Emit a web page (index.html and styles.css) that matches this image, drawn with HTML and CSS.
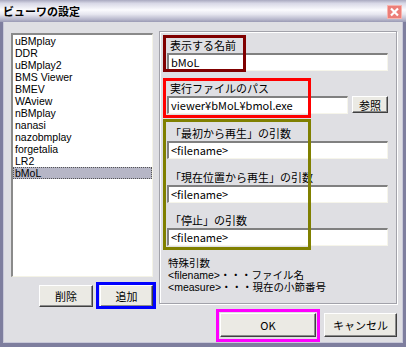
FILE: index.html
```html
<!DOCTYPE html>
<html lang="ja">
<head>
<meta charset="utf-8">
<title>ビューワの設定</title>
<link rel="stylesheet" href="styles.css">
</head>
<body>
<div class="window">
  <div class="titlebar">
    <span class="title">ビューワの設定</span>
    <span class="close">
      <svg width="15" height="14" viewBox="0 0 15 14">
        <rect x="0.5" y="0.5" width="14" height="13" fill="#ec7e78" stroke="#f6b4ae"/>
        <path d="M4 3.5 L11 10.5 M11 3.5 L4 10.5" stroke="#fff" stroke-width="2.2"/>
      </svg>
    </span>
  </div>
  <div class="frame">
    <div class="left">
      <div class="listbox">
        <div class="item">uBMplay</div>
        <div class="item">DDR</div>
        <div class="item">uBMplay2</div>
        <div class="item">BMS Viewer</div>
        <div class="item">BMEV</div>
        <div class="item">WAview</div>
        <div class="item">nBMplay</div>
        <div class="item">nanasi</div>
        <div class="item">nazobmplay</div>
        <div class="item">forgetalia</div>
        <div class="item">LR2</div>
        <div class="item selected">bMoL</div>
      </div>
      <div class="left-buttons">
        <div class="btn btn-del">削除</div>
        <div class="btn btn-add">追加</div>
      </div>
    </div>
    <div class="right">
      <div class="group">
        <div class="field f-name">
          <div class="label">表示する名前</div>
          <div class="input">bMoL</div>
        </div>
        <div class="field f-path">
          <div class="label">実行ファイルのパス</div>
          <div class="path-row">
            <div class="input input-path">viewer¥bMoL¥bmol.exe</div>
            <div class="btn btn-browse">参照</div>
          </div>
        </div>
        <div class="field f-arg1">
          <div class="label">「最初から再生」の引数</div>
          <div class="input">&lt;filename&gt;</div>
        </div>
        <div class="field f-arg2">
          <div class="label">「現在位置から再生」の引数</div>
          <div class="input">&lt;filename&gt;</div>
        </div>
        <div class="field f-arg3">
          <div class="label">「停止」の引数</div>
          <div class="input">&lt;filename&gt;</div>
        </div>
        <div class="notes">
          <div>特殊引数</div>
          <div>&lt;filename&gt;・・・ファイル名</div>
          <div>&lt;measure&gt;・・・現在の小節番号</div>
        </div>
      </div>
      <div class="dlg-buttons">
        <div class="btn btn-ok">OK</div>
        <div class="btn btn-cancel">キャンセル</div>
      </div>
    </div>
  </div>
  <div class="mark mark-name"></div>
  <div class="mark mark-path"></div>
  <div class="mark mark-args"></div>
  <div class="mark mark-add"></div>
  <div class="mark mark-ok"></div>
</div>
</body>
</html>
```
FILE: styles.css
```css
* { box-sizing: border-box; }
html, body { margin: 0; padding: 0; background: #dfdfe3; }
body {
  font-family: "Noto Sans CJK JP", "Noto Sans", sans-serif;
  font-size: 11px;
  color: #000;
}
.window {
  position: relative;
  width: 406px;
  height: 347px;
  display: flex;
  flex-direction: column;
}
.titlebar {
  height: 22px;
  flex: none;
  display: flex;
  align-items: center;
  justify-content: space-between;
  padding: 0 4px 0 3px;
  background: linear-gradient(#a9a9c0 0%, #d8d8e6 15%, #fbfbfe 45%, #e6e6ef 65%, #b8b8cc 88%, #9a9ab4 100%);
}
.title {
  font-weight: bold;
  font-size: 11px;
  line-height: 14px;
}
.close { display: flex; margin-top: 1px; }
.frame {
  flex: 1;
  display: flex;
  padding: 9px 6px 0 8px;
  border-left: 3px solid #7e7e9e;
  border-right: 3px solid #7e7e9e;
  border-bottom: 4px solid #7e7e9e;
  box-shadow: inset 1px 0 #c8c8d8, inset -1px 0 #c8c8d8, inset 0 -1px #c8c8d8;
  background: #dfdfe3;
}
.left {
  width: 142px;
  margin-top: 2px;
  display: flex;
  flex-direction: column;
}
.listbox {
  height: 244px;
  background: #fff;
  border-top: 2px solid #8a8a8a;
  border-left: 2px solid #8a8a8a;
  border-right: 1px solid #f4f3e6;
  border-bottom: 1px solid #f4f3e6;
  font-family: "Liberation Sans", "Noto Sans CJK JP", sans-serif;
  font-size: 10.5px;
}
.item {
  height: 12px;
  line-height: 12px;
  padding-left: 2px;
  white-space: nowrap;
}
.item.selected {
  background: #b6b6c6;
  outline: 1px dotted #555;
  outline-offset: -1px;
}
.left-buttons {
  display: flex;
  justify-content: flex-end;
  gap: 7px;
  margin-top: 8px;
}
.btn {
  display: flex;
  align-items: center;
  justify-content: center;
  background: #ebeae4;
  border-top: 1px solid #fff;
  border-left: 1px solid #fff;
  border-right: 1px solid #404040;
  border-bottom: 1px solid #404040;
  box-shadow: inset -1px -1px #8c8c8c;
  white-space: nowrap;
}
.btn-del { width: 54px; height: 22px; }
.btn-add { width: 53px; height: 22px; }
.right {
  width: 238px;
  margin-left: 6px;
  display: flex;
  flex-direction: column;
}
.group {
  height: 273px;
  border: 1px solid #a2a2aa;
  box-shadow: inset 1px 1px #fff, 1px 1px #fff;
  padding: 5px 0 0 7px;
}
.label {
  height: 15px;
  line-height: 15px;
  padding-left: 3px;
  white-space: nowrap;
}
.f-name .label { height: 16px; line-height: 16px; }
.input {
  width: 221px;
  height: 18px;
  line-height: 15px;
  padding-left: 2px;
  background: #fff;
  border-top: 2px solid #808080;
  border-left: 2px solid #808080;
  border-right: 1px solid #f6f5ea;
  border-bottom: 1px solid #f6f5ea;
  white-space: nowrap;
}
.f-path { margin-top: 10px; }
.f-arg1 { margin-top: 12px; }
.f-arg2 { margin-top: 11px; }
.f-arg3 { margin-top: 10px; }
.path-row { display: flex; gap: 4px; }
.input-path { width: 181px; }
.btn-browse { width: 36px; height: 17px; }
.notes {
  margin-top: 11px;
  padding-left: 1px;
  font-family: "Liberation Sans", "Noto Sans CJK JP", sans-serif;
  font-size: 10.5px;
  line-height: 12px;
  white-space: nowrap;
}
.dlg-buttons {
  display: flex;
  justify-content: flex-end;
  gap: 8px;
  margin-top: 9px;
}
.btn-ok { width: 96px; height: 24px; }
.btn-cancel { width: 73px; height: 24px; }
.mark {
  position: absolute;
  border: 3px solid;
  pointer-events: none;
}
.mark-name { left: 163px; top: 35px; width: 83px; height: 37px; border-color: #800000; }
.mark-path { left: 163px; top: 78px; width: 148px; height: 40px; border-color: #ff0000; }
.mark-args { left: 163px; top: 119px; width: 148px; height: 131px; border-color: #808000; }
.mark-add { left: 96px; top: 282px; width: 60px; height: 27px; border-color: #0000ff; }
.mark-ok { left: 216px; top: 309px; width: 104px; height: 33px; border-color: #ff00ff; }
```
